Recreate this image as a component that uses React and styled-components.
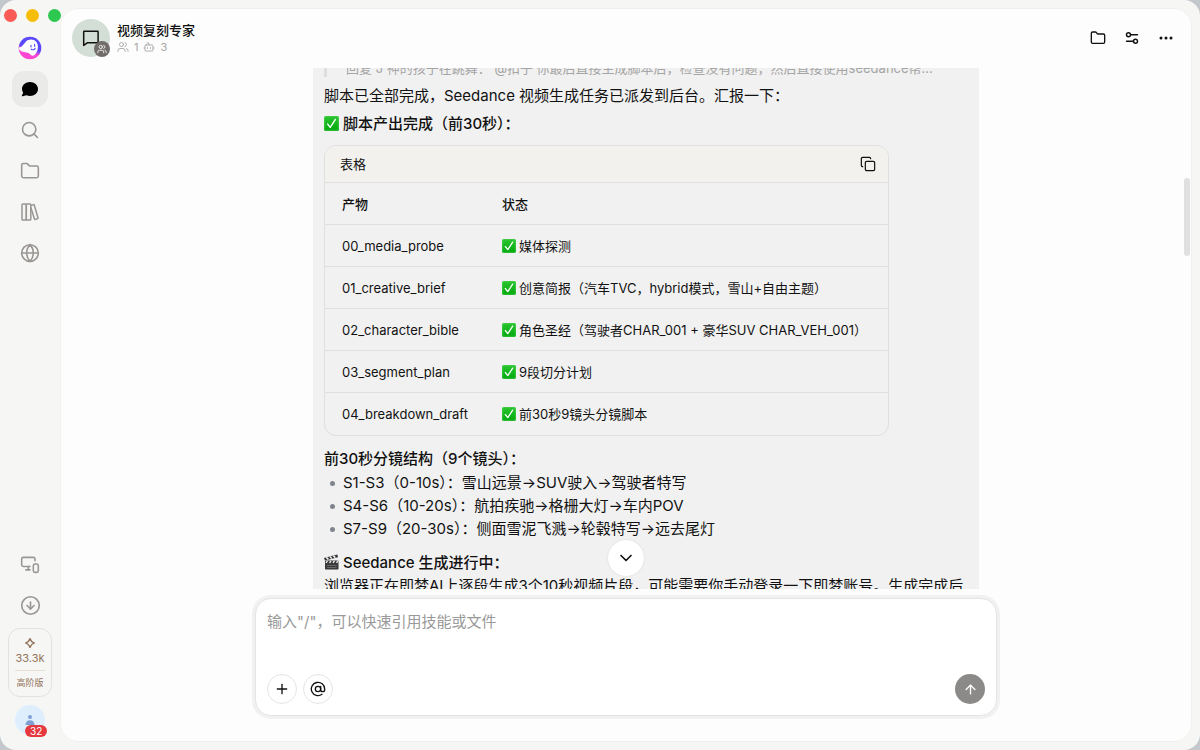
import { useLayoutEffect, useRef } from "react";
import styled, { createGlobalStyle } from "styled-components";
import {
  ArrowUp,
  AtSign,
  ChevronDown,
  CircleArrowDown,
  Copy,
  Bot,
  Folder,
  Globe,
  MonitorSmartphone,
  Plus,
  Search,
  Users,
} from "lucide-react";

const GlobalStyle = createGlobalStyle`
  * {
    box-sizing: border-box;
  }

  body {
    margin: 0;
    background: #c3c8cc;
    color: #111;
    font-family: Inter, "Noto Sans CJK SC", sans-serif;
  }

  button,
  textarea {
    margin: 0;
    padding: 0;
    border: none;
    background: none;
    color: inherit;
    font-family: inherit;
  }

  button {
    cursor: pointer;
  }
`;

const Window = styled.div`
  display: flex;
  height: 100vh;
  padding: 8px 8px 8px 0;
  border-radius: 16px;
  background: #f6f6f4;
  overflow: hidden;
`;

const Sidebar = styled.nav`
  width: 60px;
  flex-shrink: 0;
  display: flex;
  flex-direction: column;
  align-items: center;
  padding-bottom: 7px;
`;

const TrafficLights = styled.div`
  display: flex;
  gap: 9px;
  padding: 1px 0 0 4px;
  margin-bottom: 14px;
`;

const Light = styled.span`
  width: 13px;
  height: 13px;
  border-radius: 50%;
  background: ${(props) => props.$color};
`;

const NavGroup = styled.div`
  display: flex;
  flex-direction: column;
  align-items: center;
  gap: 5px;
  margin-top: ${(props) => props.$top || "0"};
`;

const NavButton = styled.button`
  width: 36px;
  height: 36px;
  display: flex;
  align-items: center;
  justify-content: center;
  border-radius: 12px;
  background: ${(props) => (props.$active ? "#eaeae9" : "transparent")};
  color: ${(props) => (props.$active ? "#000" : "#999694")};
`;

const PlanCard = styled.button`
  width: 44px;
  margin-top: 5px;
  padding: 8px 6px 6px;
  display: flex;
  flex-direction: column;
  align-items: center;
  border: 1px solid #e4e2df;
  border-radius: 12px;
  color: #94745a;
`;

const Credits = styled.span`
  width: 100%;
  padding: 2px 0 5px;
  border-bottom: 1px solid #e8e0d8;
  font-size: 11px;
  line-height: 14px;
`;

const PlanName = styled.span`
  padding-top: 5px;
  font-size: 9px;
  line-height: 14px;
`;

const Account = styled.button`
  position: relative;
  width: 30px;
  height: 30px;
  margin-top: 8px;
  display: flex;
  align-items: center;
  justify-content: center;
  border-radius: 50%;
  background: #dfeefd;
`;

const Badge = styled.span`
  position: absolute;
  top: 20px;
  left: 10px;
  padding: 0 5px;
  border-radius: 6px;
  background: #e5393f;
  color: #fff;
  font-size: 10px;
  line-height: 12px;
`;

const Panel = styled.main`
  position: relative;
  flex: 1;
  min-width: 0;
  display: flex;
  flex-direction: column;
  border: 1px solid #f0f0ef;
  border-radius: 18px;
  background: #fdfdfd;
  overflow: hidden;
`;

const Header = styled.header`
  height: 59px;
  flex-shrink: 0;
  display: flex;
  align-items: center;
  padding: 0 15px 2px 11px;
  gap: 7px;
`;

const ChatAvatar = styled.div`
  position: relative;
  width: 38px;
  height: 38px;
  display: flex;
  align-items: center;
  justify-content: center;
  border-radius: 50%;
  background: #d3ded7;
`;

const AvatarMark = styled.span`
  position: absolute;
  right: 0;
  bottom: 0;
  width: 16px;
  height: 16px;
  display: flex;
  align-items: center;
  justify-content: center;
  border-radius: 50%;
  background: #716d6a;
  color: #fff;
`;

const ChatInfo = styled.div`
  flex: 1;
`;

const ChatTitle = styled.h1`
  margin: 0;
  font-size: 13px;
  font-weight: 500;
  line-height: 18px;
`;

const ChatMeta = styled.div`
  display: flex;
  align-items: center;
  gap: 5px;
  color: #a6a6a6;
  font-size: 11px;
  line-height: 16px;
`;

const HeaderActions = styled.div`
  display: flex;
  gap: 14px;
`;

const IconButton = styled.button`
  width: 20px;
  height: 20px;
  display: flex;
  align-items: center;
  justify-content: center;
`;

const ScrollArea = styled.div`
  flex: 1;
  min-height: 0;
  overflow-y: auto;
  scrollbar-width: none;
`;

const ScrollThumb = styled.span`
  position: absolute;
  top: 169px;
  right: 1px;
  width: 6px;
  height: 78px;
  border-radius: 3px;
  background: #e0e0e0;
`;

const Thread = styled.div`
  max-width: 740px;
  margin: 0 auto;
  padding: 0 17px 0 57px;
`;

const Bubble = styled.article`
  padding: 10px 12px 32px 11px;
  background: #f1f1f1;
  font-size: 15px;
  line-height: 23px;
`;

const Quote = styled.blockquote`
  margin: 0 0 7px;
  padding-left: 19px;
  border-left: 3px solid #dedede;
  color: #a5a5a5;
  font-size: 13px;
  line-height: 18px;
  white-space: nowrap;
`;

const Paragraph = styled.p`
  margin: 0;
`;

const Heading = styled.h2`
  display: flex;
  align-items: center;
  gap: 4px;
  margin: ${(props) => props.$top || "0"} 0 0;
  font-size: 15px;
  font-weight: 500;
  line-height: 23px;
`;

const TableCard = styled.section`
  width: 565px;
  max-width: 100%;
  margin-top: 10px;
  border: 1px solid #dfdfdf;
  border-radius: 12px;
  overflow: hidden;
  font-size: 13px;
`;

const TableBar = styled.div`
  height: 36px;
  display: flex;
  align-items: center;
  justify-content: space-between;
  padding: 0 10px 0 15px;
  background: #f2f1ed;
`;

const Table = styled.table`
  width: 100%;
  border-collapse: collapse;
`;

const Cell = styled.td`
  height: 42px;
  padding: 0 0 0 17px;
  border-top: 1px solid #dfdfdf;
  line-height: 18px;
  text-align: left;
`;

const HeadCell = styled(Cell)`
  width: ${(props) => props.$width || "auto"};
  font-weight: 500;
`;

const Status = styled.span`
  display: flex;
  align-items: center;
  gap: 3px;
`;

const List = styled.ul`
  margin: 1px 0 0;
  padding-left: 19px;
  list-style: none;
`;

const ListItem = styled.li`
  position: relative;

  &::before {
    content: "";
    position: absolute;
    top: 10px;
    left: -13px;
    width: 5px;
    height: 5px;
    border-radius: 50%;
    background: #80848c;
  }
`;

const Footer = styled.footer`
  position: relative;
  flex-shrink: 0;
  padding: 9px 20px 25px;
`;

const JumpButton = styled.button`
  position: absolute;
  top: -49px;
  left: 50%;
  width: 36px;
  height: 36px;
  margin-left: -18px;
  display: flex;
  align-items: center;
  justify-content: center;
  border-radius: 50%;
  background: #fff;
  box-shadow: 0 0 2px rgba(0, 0, 0, 0.12);
`;

const Composer = styled.form`
  max-width: 742px;
  margin: 0 auto;
  padding: 11px;
  border: 1px solid #e4e4e4;
  border-radius: 16px;
  background: #fff;
  box-shadow: 0 0 0 3px #f1f1f1;
`;

const Prompt = styled.textarea`
  display: block;
  width: 100%;
  height: 64px;
  outline: none;
  resize: none;
  font-size: 15px;
  line-height: 24px;

  &::placeholder {
    color: #999;
  }
`;

const ComposerTools = styled.div`
  display: flex;
  gap: 6px;
`;

const RoundButton = styled.button`
  width: 30px;
  height: 30px;
  display: flex;
  align-items: center;
  justify-content: center;
  border: 1px solid #e5e5e5;
  border-radius: 50%;
`;

const SendButton = styled(RoundButton)`
  margin-left: auto;
  border: none;
  background: #8b8a89;
  color: #fff;
`;

const Logo = () => (
  <svg width="24" height="24" viewBox="0 0 24 24" aria-label="首页">
    <defs>
      <linearGradient id="logo-fill" x1="0.7" y1="0" x2="0.35" y2="1">
        <stop offset="0.5" stopColor="#5a48fb" />
        <stop offset="0.7" stopColor="#fb46d2" />
      </linearGradient>
    </defs>
    <circle cx="12" cy="12" r="11.300" fill="url(#logo-fill)" />
    <path
      d="M1 11.500C3.500 11.500 5.500 8.500 7.500 6C10.500 2.800 15.500 2.800 18.200 5.800C21.300 9.500 20 16 16.500 19C14.800 20.400 12.800 19.600 12 18C10.500 17 8.800 16.200 7.500 16.200C5.500 16.400 3 15.500 1.200 13.500Z"
      fill="#fff"
    />
    <path
      d="M13 9.200v1.800M16.600 8.400v1.800M13.200 13.200c1.500 1.100 3.300.7 4-1"
      fill="none"
      stroke="#5146fb"
      strokeWidth="1.100"
      strokeLinecap="round"
    />
  </svg>
);

const ChatFilled = () => (
  <svg width="18" height="18" viewBox="0 0 18 18" fill="currentColor">
    <path d="M9 2C13.500 2 17 5 17 9s-3.500 7-8 7c-1.300 0-2.500-.2-3.600-.7L1.600 16.300c-.6.100-.9-.5-.6-1l1.200-2.500C1.400 11.700 1 10.400 1 9c0-4 3.500-7 8-7z" />
  </svg>
);

const ChatOutline = () => (
  <svg
    width="18"
    height="18"
    viewBox="0 0 18 18"
    fill="none"
    stroke="currentColor"
    strokeWidth="1.500"
    strokeLinejoin="round"
  >
    <path d="M1.700 2.800c0-.4.200-.6.600-.6h13.200c.4 0 .6.200.6.600v10.400c0 .4-.2.600-.6.600H5.200L1.700 16.400z" />
  </svg>
);

const Books = () => (
  <svg
    width="20"
    height="20"
    viewBox="0 0 20 20"
    fill="none"
    stroke="currentColor"
    strokeWidth="1.500"
    strokeLinejoin="round"
  >
    <rect x="2" y="2" width="4.300" height="16" rx="0.800" />
    <rect x="6.300" y="2" width="4.500" height="16" rx="0.800" />
    <path d="M10.900 3.400l2.300-.7c.5-.2.900.1 1.100.5l3.700 12.500c.1.500-.1.900-.5 1l-2.100.7c-.5.100-.9-.1-1-.6L10.800 5.500" />
  </svg>
);

const Sliders = () => (
  <svg
    width="16"
    height="16"
    viewBox="0 0 16 16"
    fill="none"
    stroke="currentColor"
    strokeWidth="1.400"
    strokeLinecap="round"
  >
    <circle cx="4.500" cy="4.700" r="2" />
    <path d="M6.500 4.700H13.500" />
    <circle cx="11.500" cy="11.300" r="2" />
    <path d="M9.500 11.300H2.500" />
  </svg>
);

const Dots = () => (
  <svg width="16" height="16" viewBox="0 0 16 16" fill="currentColor">
    <circle cx="3" cy="8" r="1.500" />
    <circle cx="8" cy="8" r="1.500" />
    <circle cx="13" cy="8" r="1.500" />
  </svg>
);

const Spark = () => (
  <svg
    width="12"
    height="12"
    viewBox="0 0 12 12"
    fill="none"
    stroke="currentColor"
    strokeWidth="1.300"
    strokeLinejoin="round"
  >
    <path d="M6 1.500Q7 5 10.500 6Q7 7 6 10.500Q5 7 1.500 6Q5 5 6 1.500Z" />
  </svg>
);

const Person = () => (
  <svg width="12" height="14" viewBox="0 0 12 14" fill="#7f9fd0">
    <circle cx="6" cy="4" r="2" />
    <path d="M1.500 12c0-3 1.800-4.800 4.500-4.800s4.500 1.800 4.500 4.800z" />
  </svg>
);

const Check = ({ size = 14 }) => (
  <svg width={size} height={size} viewBox="0 0 16 16" role="img" aria-label="✅">
    <defs>
      <linearGradient id="check-fill" x1="0" y1="0" x2="0" y2="1">
        <stop offset="0" stopColor="#2bc52f" />
        <stop offset="1" stopColor="#00a80c" />
      </linearGradient>
    </defs>
    <rect x="0" y="0" width="16" height="16" rx="2" fill="url(#check-fill)" />
    <rect
      x="0.800"
      y="0.800"
      width="14.400"
      height="14.400"
      rx="1.500"
      fill="none"
      stroke="#5bd35c"
      strokeWidth="0.600"
    />
    <path
      d="M3.900 8.600l2.700 3.600L12.200 3.600"
      fill="none"
      stroke="#fff"
      strokeWidth="1.500"
      strokeLinecap="round"
      strokeLinejoin="round"
    />
  </svg>
);

const Clapper = () => (
  <svg width="15" height="16" viewBox="0 0 15 16" role="img" aria-label="🎬">
    <path d="M0 4L13.300 0.500L14 3.200L1 6.500Z" fill="#333" />
    <path
      d="M2.300 3.400l2 2M5.800 2.500l2 2M9.300 1.600l2 2"
      stroke="#eee"
      strokeWidth="1.500"
    />
    <rect x="1" y="6.500" width="13.500" height="9" rx="0.800" fill="#3a3a3a" />
    <path
      d="M3.500 6.800l-1.500 2M7 6.800l-1.500 2M10.500 6.800l-1.500 2M14 6.800l-1.500 2"
      stroke="#eee"
      strokeWidth="1.400"
    />
    <path d="M3 11.500h9.500M3 13.500h9.500" stroke="#888" strokeWidth="0.600" />
  </svg>
);

const lights = ["#fb5b57", "#f6bd08", "#2dc84f"];

const navItems = [
  { label: "对话", icon: <ChatFilled />, active: true },
  { label: "搜索", icon: <Search size={20} strokeWidth={1.9} /> },
  { label: "文件", icon: <Folder size={20} strokeWidth={1.9} /> },
  { label: "资料库", icon: <Books /> },
  { label: "浏览器", icon: <Globe size={20} strokeWidth={1.9} /> },
];

const rows = [
  { name: "00_media_probe", status: "媒体探测" },
  {
    name: "01_creative_brief",
    status: "创意简报（汽车TVC，hybrid模式，雪山+自由主题）",
  },
  {
    name: "02_character_bible",
    status: "角色圣经（驾驶者CHAR_001 + 豪华SUV CHAR_VEH_001）",
  },
  { name: "03_segment_plan", status: "9段切分计划" },
  { name: "04_breakdown_draft", status: "前30秒9镜头分镜脚本" },
];

const shots = [
  "S1-S3（0-10s）：雪山远景→SUV驶入→驾驶者特写",
  "S4-S6（10-20s）：航拍疾驰→格栅大灯→车内POV",
  "S7-S9（20-30s）：侧面雪泥飞溅→轮毂特写→远去尾灯",
];

const Message = () => (
  <Bubble>
    <Quote>
      回复 J 神的孩子在跳舞： @扣子 你最后直接生成脚本后，检查没有问题，然后直接使用seedance帮...
    </Quote>
    <Paragraph>
      脚本已全部完成，Seedance 视频生成任务已派发到后台。汇报一下：
    </Paragraph>
    <Heading $top="5px">
      <Check size={15} />
      脚本产出完成（前30秒）：
    </Heading>
    <TableCard>
      <TableBar>
        <span>表格</span>
        <IconButton aria-label="复制">
          <Copy size={16} strokeWidth={1.8} />
        </IconButton>
      </TableBar>
      <Table>
        <thead>
          <tr>
            <HeadCell as="th" $width="160px">
              产物
            </HeadCell>
            <HeadCell as="th">状态</HeadCell>
          </tr>
        </thead>
        <tbody>
          {rows.map((row) => (
            <tr key={row.name}>
              <Cell>{row.name}</Cell>
              <Cell>
                <Status>
                  <Check />
                  {row.status}
                </Status>
              </Cell>
            </tr>
          ))}
        </tbody>
      </Table>
    </TableCard>
    <Heading $top="11px">前30秒分镜结构（9个镜头）：</Heading>
    <List>
      {shots.map((shot) => (
        <ListItem key={shot}>{shot}</ListItem>
      ))}
    </List>
    <Heading $top="11px">
      <Clapper />
      Seedance 生成进行中：
    </Heading>
    <Paragraph>
      浏览器正在即梦AI上逐段生成3个10秒视频片段，可能需要你手动登录一下即梦账号。生成完成后
    </Paragraph>
  </Bubble>
);

const App = () => {
  const scrollRef = useRef(null);

  // open the thread part-way down, under the quoted line
  useLayoutEffect(() => {
    scrollRef.current.scrollTop = 19;
  }, []);

  return (
    <>
      <GlobalStyle />
      <Window>
        <Sidebar>
          <TrafficLights>
            {lights.map((color) => (
              <Light key={color} $color={color} />
            ))}
          </TrafficLights>
          <Logo />
          <NavGroup $top="11px">
            {navItems.map((item) => (
              <NavButton
                key={item.label}
                aria-label={item.label}
                $active={item.active}
              >
                {item.icon}
              </NavButton>
            ))}
          </NavGroup>
          <NavGroup $top="auto">
            <NavButton aria-label="设备">
              <MonitorSmartphone size={20} strokeWidth={1.9} />
            </NavButton>
            <NavButton aria-label="下载">
              <CircleArrowDown size={21} strokeWidth={1.9} />
            </NavButton>
          </NavGroup>
          <PlanCard>
            <Spark />
            <Credits>33.3k</Credits>
            <PlanName>高阶版</PlanName>
          </PlanCard>
          <Account aria-label="账号">
            <Person />
            <Badge>32</Badge>
          </Account>
        </Sidebar>
        <Panel>
          <Header>
            <ChatAvatar>
              <ChatOutline />
              <AvatarMark>
                <Users size={10} strokeWidth={2} />
              </AvatarMark>
            </ChatAvatar>
            <ChatInfo>
              <ChatTitle>视频复刻专家</ChatTitle>
              <ChatMeta>
                <Users size={12} strokeWidth={1.8} />
                <span>1</span>
                <Bot size={12} strokeWidth={1.8} />
                <span>3</span>
              </ChatMeta>
            </ChatInfo>
            <HeaderActions>
              <IconButton aria-label="文件夹">
                <Folder size={16} strokeWidth={2} />
              </IconButton>
              <IconButton aria-label="设置">
                <Sliders />
              </IconButton>
              <IconButton aria-label="更多">
                <Dots />
              </IconButton>
            </HeaderActions>
          </Header>
          <ScrollArea ref={scrollRef}>
            <Thread>
              <Message />
            </Thread>
          </ScrollArea>
          <ScrollThumb />
          <Footer>
            <JumpButton aria-label="回到底部">
              <ChevronDown size={20} strokeWidth={2} />
            </JumpButton>
            <Composer>
              <Prompt
                aria-label="消息"
                placeholder={'输入"/"，可以快速引用技能或文件'}
              />
              <ComposerTools>
                <RoundButton type="button" aria-label="添加">
                  <Plus size={16} strokeWidth={2} />
                </RoundButton>
                <RoundButton type="button" aria-label="提及">
                  <AtSign size={16} strokeWidth={2} />
                </RoundButton>
                <SendButton type="submit" aria-label="发送">
                  <ArrowUp size={15} strokeWidth={2.2} />
                </SendButton>
              </ComposerTools>
            </Composer>
          </Footer>
        </Panel>
      </Window>
    </>
  );
};

export default App;
